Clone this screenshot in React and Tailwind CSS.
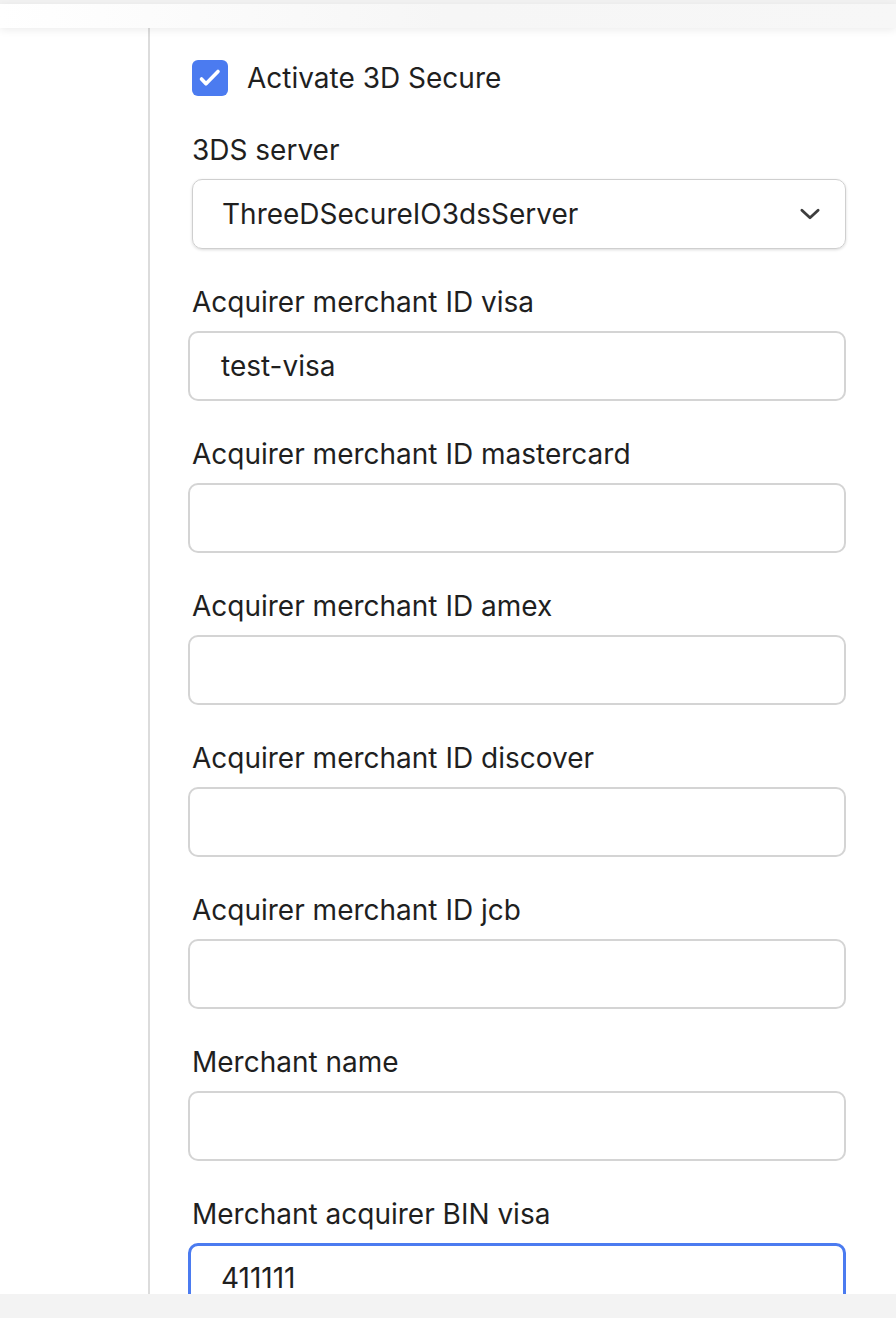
import React from "react";

const fields = [
  { label: "Acquirer merchant ID visa", value: "test-visa" },
  { label: "Acquirer merchant ID mastercard", value: "" },
  { label: "Acquirer merchant ID amex", value: "" },
  { label: "Acquirer merchant ID discover", value: "" },
  { label: "Acquirer merchant ID jcb", value: "" },
  { label: "Merchant name", value: "" },
];

export default function App() {
  return (
    <div className="w-[896px] h-[1318px] bg-white flex flex-col overflow-hidden text-[#1f1f1f]" style={{ fontFamily: "Inter, 'Liberation Sans', sans-serif" }}>
      <div className="h-[4px] bg-[#f2f2f2] shrink-0" />
      <div className="h-[24px] shrink-0 bg-gradient-to-r from-white via-[#f6f6f6] to-[#f7f7f7] shadow-[0_2px_8px_rgba(0,0,0,0.08)] relative z-10" />
      <div className="flex flex-1 min-h-0">
        <div className="w-[150px] shrink-0 border-r-2 border-[#dcdcdc]" />
        <div className="flex-1 min-w-0 pl-[38px] pr-[50px] pt-[32px] overflow-hidden">
          <div className="flex items-center gap-[19px] pl-[4px]">
            <div className="w-[36px] h-[36px] rounded-[6px] bg-[#4b7bf0] shrink-0">
              <svg width="36" height="36" viewBox="0 0 36 36" fill="none">
                <path d="M9.5 19l4.5 4.8L26 11.5" stroke="white" strokeWidth="3.6" strokeLinecap="round" strokeLinejoin="round" />
              </svg>
            </div>
            <span className="text-[28px] leading-[36px]">Activate 3D Secure</span>
          </div>

          <div className="mt-[36px] pl-[4px] text-[28px] leading-[36px]">3DS server</div>
          <div className="mt-[11px] ml-[4px] h-[70px] rounded-[10px] border border-[#cfcfcf] shadow-[0_1px_3px_rgba(0,0,0,0.15)] flex items-center justify-between pl-[29px] pr-[22px]">
            <span className="text-[28px]">ThreeDSecureIO3dsServer</span>
            <svg width="26" height="26" viewBox="0 0 24 24" fill="none">
              <path d="M4.5 8.5l7.5 7 7.5-7" stroke="#3d3d3d" strokeWidth="2.6" strokeLinecap="round" strokeLinejoin="round" />
            </svg>
          </div>

          {fields.map((f) => (
            <div key={f.label}>
              <div className="mt-[35px] pl-[4px] text-[28px] leading-[36px]">{f.label}</div>
              <div className="mt-[11px] h-[70px] rounded-[10px] border-2 border-[#d4d4d4] flex items-center pl-[31px] text-[28px]">
                {f.value}
              </div>
            </div>
          ))}

          <div className="mt-[35px] pl-[4px] text-[28px] leading-[36px]">Merchant acquirer BIN visa</div>
          <div className="mt-[11px] h-[70px] rounded-[10px] border-[3px] border-[#4b7bf0] flex items-center pl-[30px] text-[28px]">
            411111
          </div>
        </div>
      </div>
      <div className="h-[24px] bg-[#f3f3f3] shrink-0" />
    </div>
  );
}
